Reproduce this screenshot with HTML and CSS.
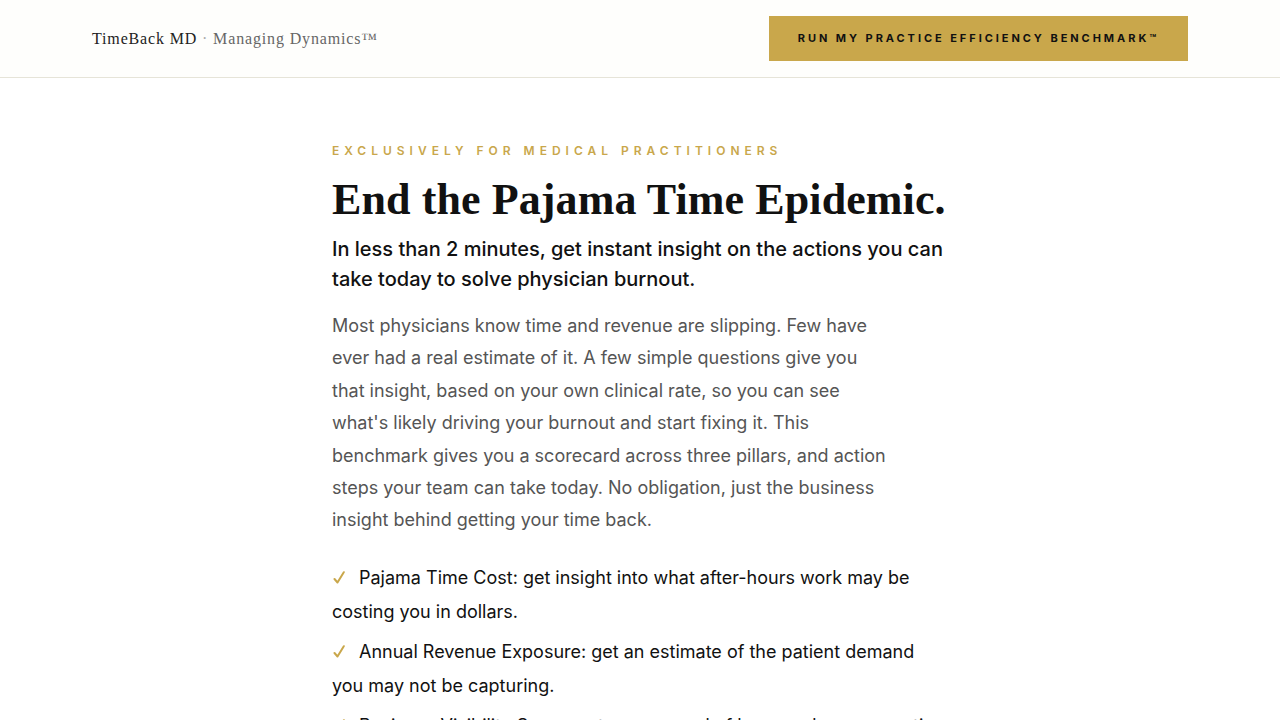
FILE: index.html
```
<!DOCTYPE html>
<html lang="en">
<head>
<meta charset="utf-8">
<title>TimeBack MD</title>
<link rel="stylesheet" href="styles.css">
</head>
<body>
<header class="site-header">
  <div class="brand"><span class="brand-name">TimeBack MD</span><span class="brand-sep"> · </span><span class="brand-sub">Managing Dynamics™</span></div>
  <a class="cta" href="#">RUN MY PRACTICE EFFICIENCY BENCHMARK™</a>
</header>
<main class="hero">
  <p class="eyebrow">EXCLUSIVELY FOR MEDICAL PRACTITIONERS</p>
  <h1 class="title">End the Pajama Time Epidemic.</h1>
  <p class="lead">In less than 2 minutes, get instant insight on the actions you can take today to solve physician burnout.</p>
  <p class="body">Most physicians know time and revenue are slipping. Few have ever had a real estimate of it. A few simple questions give you that insight, based on your own clinical rate, so you can see what's likely driving your burnout and start fixing it. This benchmark gives you a scorecard across three pillars, and action steps your team can take today. No obligation, just the business insight behind getting your time back.</p>
  <ul class="checks">
    <li><svg class="tick" viewBox="0 0 12 13" width="12" height="13"><path d="M1.5 8 L4.5 11.5 L10.8 1.2" fill="none" stroke="#c9a74b" stroke-width="2" stroke-linecap="round" stroke-linejoin="round"/></svg>Pajama Time Cost: get insight into what after-hours work may be costing you in dollars.</li>
    <li><svg class="tick" viewBox="0 0 12 13" width="12" height="13"><path d="M1.5 8 L4.5 11.5 L10.8 1.2" fill="none" stroke="#c9a74b" stroke-width="2" stroke-linecap="round" stroke-linejoin="round"/></svg>Annual Revenue Exposure: get an estimate of the patient demand you may not be capturing.</li>
    <li><svg class="tick" viewBox="0 0 12 13" width="12" height="13"><path d="M1.5 8 L4.5 11.5 L10.8 1.2" fill="none" stroke="#c9a74b" stroke-width="2" stroke-linecap="round" stroke-linejoin="round"/></svg>Business Visibility Score: get a scorecard of how ready your practice is to scale without burning you out.</li>
  </ul>
</main>
</body>
</html>
```
FILE: styles.css
```
* { box-sizing: border-box; }
html, body { margin: 0; padding: 0; background: #ffffff; }
body { font-family: Inter, "Noto Sans", sans-serif; color: #111; }

.site-header {
  height: 78px;
  display: flex;
  align-items: center;
  justify-content: space-between;
  padding: 0 92px;
  background: #fefefc;
  border-bottom: 1px solid #e6e4d8;
}
.brand {
  font-family: "Liberation Serif", "DejaVu Serif", serif;
  font-size: 16px;
  letter-spacing: 0.85px;
  padding-top: 1px;
}
.brand-name { color: #222; }
.brand-sep { color: #aaa; }
.brand-sub { color: #666; }

.cta {
  display: flex;
  align-items: center;
  justify-content: center;
  width: 419px;
  height: 45px;
  background: #c9a74b;
  color: #111;
  text-decoration: none;
  font-size: 11px;
  font-weight: 700;
  letter-spacing: 2.95px;
  padding-bottom: 2px;
}

.hero {
  width: 616px;
  margin: 0 0 0 332px;
  padding-top: 65px;
}
.eyebrow {
  margin: 0;
  color: #c9a74b;
  font-size: 12px;
  font-weight: 600;
  letter-spacing: 5px;
  line-height: 16px;
}
.title {
  margin: 14px 0 0;
  font-family: "Liberation Serif", "DejaVu Serif", serif;
  font-weight: 700;
  font-size: 44px;
  line-height: 54px;
  color: #111;
  letter-spacing: 0.1px;
  white-space: nowrap;
}
.lead {
  margin: 7px 0 0;
  font-size: 20px;
  font-weight: 500;
  line-height: 30px;
  color: #111;
}
.body {
  margin: 16px 0 0;
  max-width: 560px;
  font-size: 18px;
  line-height: 32.4px;
  color: #555;
}
.checks {
  list-style: none;
  margin: 24px 0 0;
  padding: 0;
}
.checks li {
  font-size: 18px;
  line-height: 34px;
  color: #111;
  margin-bottom: 6px;
}
.tick {
  display: inline-block;
  vertical-align: baseline;
  margin: 0 14px 0 1px;
}
```
